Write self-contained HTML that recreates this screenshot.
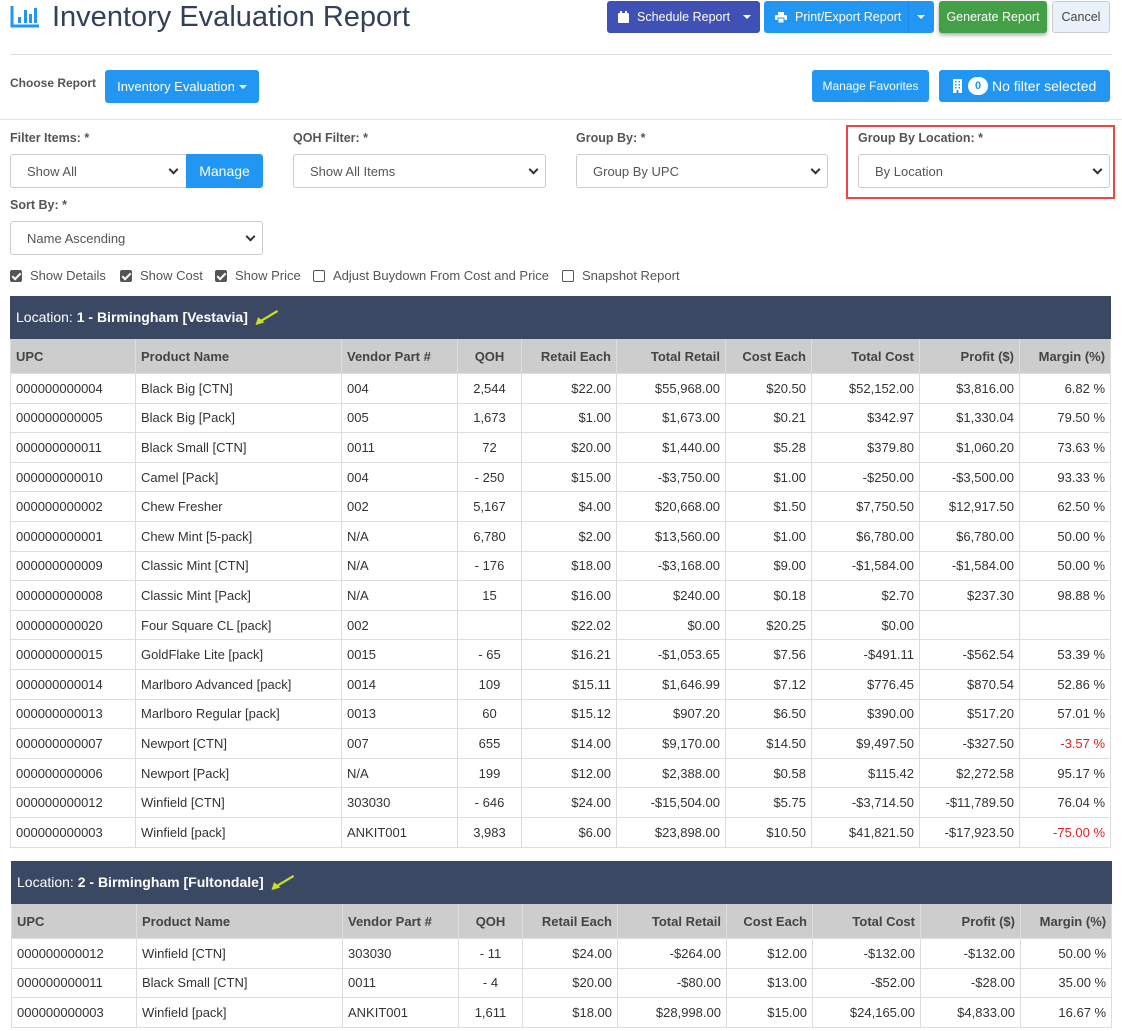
<!DOCTYPE html>
<html><head><meta charset="utf-8">
<style>
*{box-sizing:border-box}
body{margin:0;width:1122px;height:1031px;overflow:hidden;background:#fff;font-family:"Liberation Sans",Arial,sans-serif;color:#333;position:relative}
.abs{position:absolute}
.btn{position:absolute;border-radius:3px;color:#fff;font-size:12.5px;display:flex;align-items:center;justify-content:center}
.lbl{position:absolute;font-size:12.5px;font-weight:bold;color:#555}
.sel{position:absolute;border:1px solid #ccc;border-radius:3px;font-size:13px;color:#555;display:flex;align-items:center;padding-left:16px;background:#fff}
.sel .car{position:absolute;right:8px;top:50%;width:7px;height:7px;border-right:2px solid #333;border-bottom:2px solid #333;transform:translateY(-70%) rotate(45deg)}
.cb{position:absolute;top:268px;font-size:13px;color:#555;display:flex;align-items:center}
.cb i{display:inline-block;width:12px;height:12px;border:1px solid #555;border-radius:2px;margin-right:8px;position:relative}
.cb i.on{background:#555}
.cb i.on:after{content:"";position:absolute;left:3px;top:0px;width:3px;height:7px;border-right:2px solid #fff;border-bottom:2px solid #fff;transform:rotate(45deg)}
table{position:absolute;border-collapse:collapse;font-size:13px;table-layout:fixed}
td,th{border:1px solid #ddd;padding:0 5px;white-space:nowrap;overflow:hidden}
th{background:#cdcdcd;font-weight:bold;color:#444;height:35px;text-align:left}
td{height:29.6px}
.band td{background:#3b4863;color:#fff;height:42px;font-size:14px;border-color:#3b4863;line-height:16px}
.band svg{vertical-align:middle}
.r{text-align:right}
.c{text-align:center}
.neg{color:#e02020}
</style></head><body>

<svg class="abs" style="left:10px;top:6px" width="30" height="22" viewBox="0 0 30 22"><path d="M2 0V20H29" stroke="#2196f3" stroke-width="3" fill="none"/><rect x="8" y="11" width="3" height="6" fill="#2196f3"/><rect x="14" y="4" width="3" height="13" fill="#2196f3"/><rect x="19" y="8" width="3" height="9" fill="#2196f3"/><rect x="24" y="2" width="3" height="15" fill="#2196f3"/></svg>
<div class="abs" style="left:52px;top:1px;font-size:29px;font-weight:300;color:#34405a">Inventory Evaluation Report</div>

<div class="btn" style="left:607px;top:1px;width:153px;height:32px;background:#3f51b5;justify-content:flex-start;padding-left:11px">
<svg width="11" height="12" viewBox="0 0 11 12" style="margin-right:8px"><rect x="0" y="2" width="11" height="10" rx="1" fill="#fff"/><rect x="2" y="0" width="2" height="3" fill="#fff"/><rect x="7" y="0" width="2" height="3" fill="#fff"/></svg>Schedule Report
<span style="position:absolute;right:9px;top:14px;border-left:4px solid transparent;border-right:4px solid transparent;border-top:4px solid #fff"></span></div>
<div class="btn" style="left:764px;top:1px;width:170px;height:32px;background:#2196f3;justify-content:flex-start;padding-left:11px">
<svg width="12" height="11" viewBox="0 0 12 11" style="margin-right:8px"><rect x="3" y="0" width="6" height="3" fill="#fff"/><rect x="0" y="3" width="12" height="5" rx="1" fill="#fff"/><rect x="3" y="6" width="6" height="5" fill="#fff" stroke="#2196f3"/></svg>Print/Export Report
<span style="position:absolute;right:9px;top:14px;border-left:4px solid transparent;border-right:4px solid transparent;border-top:4px solid #fff"></span>
<span style="position:absolute;right:25px;top:0;bottom:0;width:1px;background:#1e88e5"></span></div>
<div class="btn" style="left:939px;top:1px;width:108px;height:32px;background:#43a047;box-shadow:0 2px 4px rgba(0,0,0,.35)">Generate Report</div>
<div class="btn" style="left:1052px;top:1px;width:58px;height:32px;background:#e9f2fb;border:1px solid #ccc;color:#444">Cancel</div>

<div class="abs" style="left:10px;top:54px;width:1102px;height:1px;background:#ddd"></div>
<div class="abs" style="left:10px;top:76px;font-size:12px;font-weight:bold;color:#555">Choose Report</div>
<div class="btn" style="left:105px;top:70px;width:154px;height:33px;background:#2196f3;font-size:13px">Inventory Evaluation <span style="margin-left:4px;border-left:4px solid transparent;border-right:4px solid transparent;border-top:4px solid #fff"></span></div>
<div class="btn" style="left:812px;top:70px;width:117px;height:32px;background:#2196f3;font-size:12px">Manage Favorites</div>
<div class="btn" style="left:939px;top:70px;width:171px;height:32px;background:#2196f3;font-size:14px;justify-content:flex-start;padding-left:14px">
<svg width="9" height="14" viewBox="0 0 9 14"><rect width="9" height="14" fill="#fff"/><rect x="2" y="2" width="1.5" height="1.5" fill="#2196f3"/><rect x="5.5" y="2" width="1.5" height="1.5" fill="#2196f3"/><rect x="2" y="5" width="1.5" height="1.5" fill="#2196f3"/><rect x="5.5" y="5" width="1.5" height="1.5" fill="#2196f3"/><rect x="2" y="8" width="1.5" height="1.5" fill="#2196f3"/><rect x="5.5" y="8" width="1.5" height="1.5" fill="#2196f3"/><rect x="3.5" y="11" width="2" height="3" fill="#2196f3"/></svg>
<span style="display:inline-flex;align-items:center;justify-content:center;width:20px;height:18px;background:#fff;color:#2196f3;border-radius:9px;font-size:11px;font-weight:bold;margin:0 4px 0 6px">0</span>No filter selected</div>
<div class="abs" style="left:0;top:119px;width:1122px;height:1px;background:#e4e4e4"></div>

<div class="lbl" style="left:10px;top:131px">Filter Items: *</div>
<div class="sel" style="left:10px;top:154px;width:178px;height:34px">Show All<span class="car" style="right:10px"></span></div>
<div class="btn" style="left:186px;top:154px;width:77px;height:34px;background:#2196f3;font-size:14px;border-radius:0 3px 3px 0">Manage</div>
<div class="lbl" style="left:293px;top:131px">QOH Filter: *</div>
<div class="sel" style="left:293px;top:154px;width:253px;height:34px">Show All Items<span class="car"></span></div>
<div class="lbl" style="left:576px;top:131px">Group By: *</div>
<div class="sel" style="left:576px;top:154px;width:252px;height:34px">Group By UPC<span class="car"></span></div>
<div class="abs" style="left:846px;top:125px;width:269px;height:74px;border:2px solid #ef4444"></div>
<div class="lbl" style="left:858px;top:131px">Group By Location: *</div>
<div class="sel" style="left:858px;top:154px;width:252px;height:34px">By Location<span class="car"></span></div>
<div class="lbl" style="left:10px;top:198px">Sort By: *</div>
<div class="sel" style="left:10px;top:221px;width:253px;height:34px">Name Ascending<span class="car"></span></div>

<div class="cb" style="left:10px"><i class="on"></i>Show Details</div>
<div class="cb" style="left:120px"><i class="on"></i>Show Cost</div>
<div class="cb" style="left:215px"><i class="on"></i>Show Price</div>
<div class="cb" style="left:313px"><i></i>Adjust Buydown From Cost and Price</div>
<div class="cb" style="left:562px"><i></i>Snapshot Report</div>

<table style="left:10px;top:296px;width:1100px">
<colgroup><col style="width:125px"><col style="width:206px"><col style="width:116px"><col style="width:64px"><col style="width:95px"><col style="width:109px"><col style="width:86px"><col style="width:108px"><col style="width:100px"><col style="width:91px"></colgroup>
<tr class="band"><td colspan="10">Location: <b>1 - Birmingham [Vestavia]</b> <svg width="30" height="16" viewBox="0 0 30 18"><path d="M27 1L7 13" stroke="#c8e01e" stroke-width="2.5"/><path d="M2 17L5 8L12 14Z" fill="#c8e01e"/></svg></td></tr>
<tr><th>UPC</th><th>Product Name</th><th>Vendor Part #</th><th class="c">QOH</th><th class="r">Retail Each</th><th class="r">Total Retail</th><th class="r">Cost Each</th><th class="r">Total Cost</th><th class="r">Profit ($)</th><th class="r">Margin (%)</th></tr>
<tr><td>000000000004</td><td>Black Big [CTN]</td><td>004</td><td class="c">2,544</td><td class="r">$22.00</td><td class="r">$55,968.00</td><td class="r">$20.50</td><td class="r">$52,152.00</td><td class="r">$3,816.00</td><td class="r">6.82 %</td></tr>
<tr><td>000000000005</td><td>Black Big [Pack]</td><td>005</td><td class="c">1,673</td><td class="r">$1.00</td><td class="r">$1,673.00</td><td class="r">$0.21</td><td class="r">$342.97</td><td class="r">$1,330.04</td><td class="r">79.50 %</td></tr>
<tr><td>000000000011</td><td>Black Small [CTN]</td><td>0011</td><td class="c">72</td><td class="r">$20.00</td><td class="r">$1,440.00</td><td class="r">$5.28</td><td class="r">$379.80</td><td class="r">$1,060.20</td><td class="r">73.63 %</td></tr>
<tr><td>000000000010</td><td>Camel [Pack]</td><td>004</td><td class="c">- 250</td><td class="r">$15.00</td><td class="r">-$3,750.00</td><td class="r">$1.00</td><td class="r">-$250.00</td><td class="r">-$3,500.00</td><td class="r">93.33 %</td></tr>
<tr><td>000000000002</td><td>Chew Fresher</td><td>002</td><td class="c">5,167</td><td class="r">$4.00</td><td class="r">$20,668.00</td><td class="r">$1.50</td><td class="r">$7,750.50</td><td class="r">$12,917.50</td><td class="r">62.50 %</td></tr>
<tr><td>000000000001</td><td>Chew Mint [5-pack]</td><td>N/A</td><td class="c">6,780</td><td class="r">$2.00</td><td class="r">$13,560.00</td><td class="r">$1.00</td><td class="r">$6,780.00</td><td class="r">$6,780.00</td><td class="r">50.00 %</td></tr>
<tr><td>000000000009</td><td>Classic Mint [CTN]</td><td>N/A</td><td class="c">- 176</td><td class="r">$18.00</td><td class="r">-$3,168.00</td><td class="r">$9.00</td><td class="r">-$1,584.00</td><td class="r">-$1,584.00</td><td class="r">50.00 %</td></tr>
<tr><td>000000000008</td><td>Classic Mint [Pack]</td><td>N/A</td><td class="c">15</td><td class="r">$16.00</td><td class="r">$240.00</td><td class="r">$0.18</td><td class="r">$2.70</td><td class="r">$237.30</td><td class="r">98.88 %</td></tr>
<tr><td>000000000020</td><td>Four Square CL [pack]</td><td>002</td><td class="c"></td><td class="r">$22.02</td><td class="r">$0.00</td><td class="r">$20.25</td><td class="r">$0.00</td><td class="r"></td><td class="r"></td></tr>
<tr><td>000000000015</td><td>GoldFlake Lite [pack]</td><td>0015</td><td class="c">- 65</td><td class="r">$16.21</td><td class="r">-$1,053.65</td><td class="r">$7.56</td><td class="r">-$491.11</td><td class="r">-$562.54</td><td class="r">53.39 %</td></tr>
<tr><td>000000000014</td><td>Marlboro Advanced [pack]</td><td>0014</td><td class="c">109</td><td class="r">$15.11</td><td class="r">$1,646.99</td><td class="r">$7.12</td><td class="r">$776.45</td><td class="r">$870.54</td><td class="r">52.86 %</td></tr>
<tr><td>000000000013</td><td>Marlboro Regular [pack]</td><td>0013</td><td class="c">60</td><td class="r">$15.12</td><td class="r">$907.20</td><td class="r">$6.50</td><td class="r">$390.00</td><td class="r">$517.20</td><td class="r">57.01 %</td></tr>
<tr><td>000000000007</td><td>Newport [CTN]</td><td>007</td><td class="c">655</td><td class="r">$14.00</td><td class="r">$9,170.00</td><td class="r">$14.50</td><td class="r">$9,497.50</td><td class="r">-$327.50</td><td class="r neg">-3.57 %</td></tr>
<tr><td>000000000006</td><td>Newport [Pack]</td><td>N/A</td><td class="c">199</td><td class="r">$12.00</td><td class="r">$2,388.00</td><td class="r">$0.58</td><td class="r">$115.42</td><td class="r">$2,272.58</td><td class="r">95.17 %</td></tr>
<tr><td>000000000012</td><td>Winfield [CTN]</td><td>303030</td><td class="c">- 646</td><td class="r">$24.00</td><td class="r">-$15,504.00</td><td class="r">$5.75</td><td class="r">-$3,714.50</td><td class="r">-$11,789.50</td><td class="r">76.04 %</td></tr>
<tr><td>000000000003</td><td>Winfield [pack]</td><td>ANKIT001</td><td class="c">3,983</td><td class="r">$6.00</td><td class="r">$23,898.00</td><td class="r">$10.50</td><td class="r">$41,821.50</td><td class="r">-$17,923.50</td><td class="r neg">-75.00 %</td></tr>
</table>

<table style="left:11px;top:861px;width:1100px">
<colgroup><col style="width:125px"><col style="width:206px"><col style="width:116px"><col style="width:64px"><col style="width:95px"><col style="width:109px"><col style="width:86px"><col style="width:108px"><col style="width:100px"><col style="width:91px"></colgroup>
<tr class="band"><td colspan="10">Location: <b>2 - Birmingham [Fultondale]</b> <svg width="30" height="16" viewBox="0 0 30 18"><path d="M27 1L7 13" stroke="#c8e01e" stroke-width="2.5"/><path d="M2 17L5 8L12 14Z" fill="#c8e01e"/></svg></td></tr>
<tr><th>UPC</th><th>Product Name</th><th>Vendor Part #</th><th class="c">QOH</th><th class="r">Retail Each</th><th class="r">Total Retail</th><th class="r">Cost Each</th><th class="r">Total Cost</th><th class="r">Profit ($)</th><th class="r">Margin (%)</th></tr>
<tr><td>000000000012</td><td>Winfield [CTN]</td><td>303030</td><td class="c">- 11</td><td class="r">$24.00</td><td class="r">-$264.00</td><td class="r">$12.00</td><td class="r">-$132.00</td><td class="r">-$132.00</td><td class="r">50.00 %</td></tr>
<tr><td>000000000011</td><td>Black Small [CTN]</td><td>0011</td><td class="c">- 4</td><td class="r">$20.00</td><td class="r">-$80.00</td><td class="r">$13.00</td><td class="r">-$52.00</td><td class="r">-$28.00</td><td class="r">35.00 %</td></tr>
<tr><td>000000000003</td><td>Winfield [pack]</td><td>ANKIT001</td><td class="c">1,611</td><td class="r">$18.00</td><td class="r">$28,998.00</td><td class="r">$15.00</td><td class="r">$24,165.00</td><td class="r">$4,833.00</td><td class="r">16.67 %</td></tr>
</table>
</body></html>
